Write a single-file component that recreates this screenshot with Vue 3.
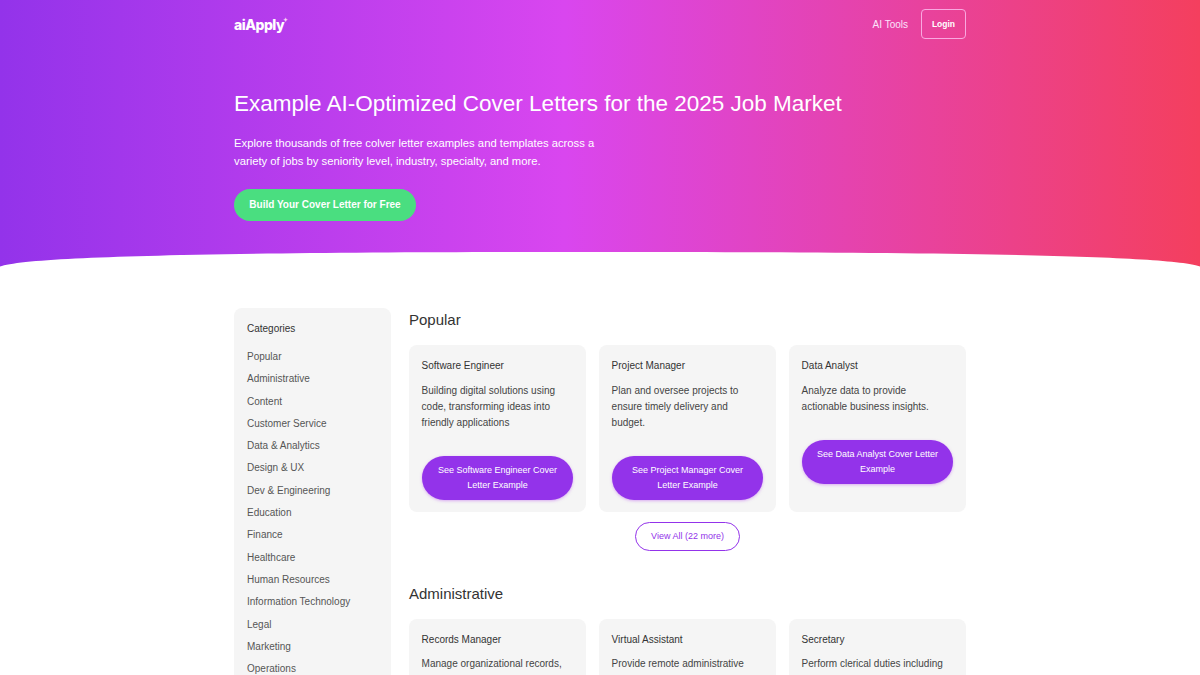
<script setup>
const categories = ['Popular', 'Administrative', 'Content', 'Customer Service', 'Data & Analytics', 'Design & UX', 'Dev & Engineering', 'Education', 'Finance', 'Healthcare', 'Human Resources', 'Information Technology', 'Legal', 'Marketing', 'Operations']

const sections = [
  {
    name: 'Popular',
    more: 22,
    jobs: [
      { title: 'Software Engineer', text: 'Building digital solutions using code, transforming ideas into friendly applications' },
      { title: 'Project Manager', text: 'Plan and oversee projects to ensure timely delivery and budget.' },
      { title: 'Data Analyst', text: 'Analyze data to provide actionable business insights.' }
    ]
  },
  {
    name: 'Administrative',
    more: 0,
    jobs: [
      { title: 'Records Manager', text: 'Manage organizational records,' },
      { title: 'Virtual Assistant', text: 'Provide remote administrative' },
      { title: 'Secretary', text: 'Perform clerical duties including' }
    ]
  }
]
</script>

<template>
  <div class="page">
    <header class="hero">
      <div class="wrap">
        <nav class="nav">
          <div class="logo">aiApply<span class="star">✦</span></div>
          <div class="nav-right">
            <a class="nav-link">AI Tools</a>
            <a class="login">Login</a>
          </div>
        </nav>
        <h1>Example AI-Optimized Cover Letters for the 2025 Job Market</h1>
        <p class="lead">Explore thousands of free colver letter examples and templates across a variety of jobs by seniority level, industry, specialty, and more.</p>
        <a class="cta">Build Your Cover Letter for Free</a>
      </div>
      <svg class="curve" viewBox="0 0 1200 17" preserveAspectRatio="none">
        <path d="M0 17 L0 15.5 C30 4.5 250 1 600 1 C950 1 1170 4.5 1200 15.5 L1200 17 Z" fill="#fff" />
      </svg>
    </header>

    <div class="wrap content">
      <aside class="sidebar">
        <div class="side-title">Categories</div>
        <a v-for="c in categories" :key="c" class="side-item">{{ c }}</a>
      </aside>
      <main class="main">
        <section v-for="s in sections" :key="s.name" class="section">
          <h2>{{ s.name }}</h2>
          <div class="cards">
            <div v-for="j in s.jobs" :key="j.title" class="card">
              <h3>{{ j.title }}</h3>
              <p>{{ j.text }}</p>
              <a v-if="s.more" class="see">See {{ j.title }} Cover Letter Example</a>
            </div>
          </div>
          <div v-if="s.more" class="more">
            <a class="view-all">View All ({{ s.more }} more)</a>
          </div>
        </section>
      </main>
    </div>
  </div>
</template>

<style>
html, body {
  margin: 0;
  overflow: hidden;
  background: #fff;
}
</style>

<style scoped>
.page {
  height: 675px;
  overflow: hidden;
  font-family: "Liberation Sans", Arial, sans-serif;
  color: #333;
}
.wrap {
  width: 732px;
  margin: 0 auto;
}
.hero {
  position: relative;
  height: 268px;
  background: linear-gradient(90deg, #9333ea 0%, #d946ef 47%, #f43f5e 100%);
  color: #fff;
}
.curve {
  position: absolute;
  left: 0;
  bottom: 0;
  width: 100%;
  height: 17px;
  display: block;
}
.nav {
  display: flex;
  justify-content: space-between;
  align-items: center;
  height: 48px;
}
.logo {
  font-family: "Inter", "Liberation Sans", sans-serif;
  font-weight: 800;
  font-size: 14px;
  letter-spacing: -0.5px;
  position: relative;
}
.star {
  position: absolute;
  font-size: 6px;
  top: 0;
  left: 100%;
  margin-left: -1.5px;
  color: #fbd5f5;
}
.nav-right {
  display: flex;
  align-items: center;
  gap: 13px;
}
.nav-link {
  font-size: 10px;
  color: #fbe4fb;
}
.login {
  box-sizing: border-box;
  width: 45px;
  height: 30px;
  border: 1px solid #f9a8e0;
  border-radius: 4px;
  display: flex;
  align-items: center;
  justify-content: center;
  font-size: 8.5px;
  font-weight: 700;
  color: #fff;
}
h1 {
  margin: 41px 0 0;
  font-size: 22.5px;
  line-height: 30px;
  font-weight: 400;
}
.lead {
  margin: 16px 0 0;
  width: 375px;
  font-size: 11.25px;
  line-height: 17.5px;
}
.cta {
  display: inline-block;
  margin-top: 19px;
  height: 32px;
  line-height: 32px;
  width: 182px;
  text-align: center;
  border-radius: 16px;
  background: #4ade80;
  font-size: 10px;
  font-weight: 700;
  color: #fff;
}
.content {
  display: flex;
  gap: 18px;
  padding-top: 40px;
  align-items: flex-start;
}
.sidebar {
  width: 157px;
  flex: none;
  box-sizing: border-box;
  padding: 14px 13px;
  background: #f5f5f5;
  border-radius: 8px;
  display: flex;
  flex-direction: column;
}
.side-title {
  font-size: 10px;
  line-height: 13px;
  margin-bottom: 11px;
}
.side-item {
  font-size: 10px;
  line-height: 22.3px;
  color: #555;
}
.main {
  flex: 1;
  min-width: 0;
}
.section {
  margin-bottom: 31.5px;
}
h2 {
  margin: 1px 0 14px;
  font-size: 15px;
  line-height: 22px;
  font-weight: 400;
}
.cards {
  display: grid;
  grid-template-columns: repeat(3, 1fr);
  gap: 13px;
}
.card {
  box-sizing: border-box;
  height: 167px;
  padding: 14px 12.6px 13px;
  background: #f5f5f5;
  border-radius: 8px;
}
h3 {
  margin: 0;
  font-size: 10px;
  line-height: 14px;
  font-weight: 400;
}
.card p {
  margin: 9.5px 0 0;
  font-size: 10px;
  line-height: 16px;
  color: #444;
}
.see {
  display: block;
  margin-top: 25px;
  padding: 7px 13px;
  border-radius: 22px;
  background: #9333ea;
  color: #fff;
  font-size: 9px;
  line-height: 15px;
  text-align: center;
  box-shadow: 0 1px 3px rgba(192, 100, 240, 0.5);
}
.more {
  display: flex;
  justify-content: center;
  margin-top: 10px;
}
.view-all {
  box-sizing: border-box;
  width: 105px;
  height: 29px;
  line-height: 26px;
  border: 1.5px solid #9333ea;
  border-radius: 15px;
  text-align: center;
  font-size: 9px;
  color: #9333ea;
}
</style>
